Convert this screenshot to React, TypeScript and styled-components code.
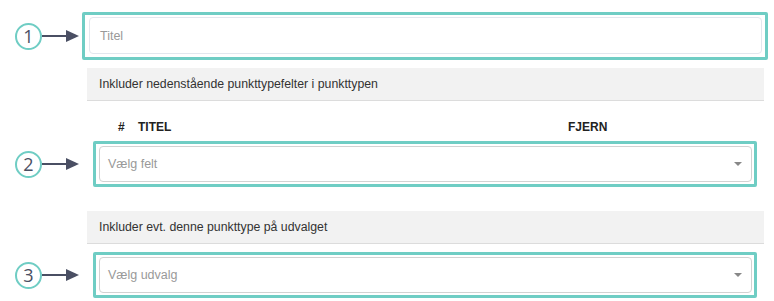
import React from "react";
import styled, { createGlobalStyle } from "styled-components";

const GlobalStyle = createGlobalStyle`
  html, body {
    margin: 0;
    padding: 0;
    background: #fff;
    font-family: "Liberation Sans", Arial, Helvetica, sans-serif;
  }
`;

const teal = "#6fcdc4";
const slate = "#4a4f63";

const Page = styled.div`
  width: 774px;
  height: 301px;
  padding-top: 12px;
  box-sizing: border-box;
  display: flex;
  flex-direction: column;
`;

const Row = styled.div`
  display: flex;
  align-items: center;
`;

const MarkerWrap = styled.div<{ $width: number }>`
  width: ${(p) => p.$width}px;
  flex: none;
  display: flex;
  align-items: center;
  padding-left: 15px;
  box-sizing: border-box;
`;

const Circle = styled.div`
  width: 27px;
  height: 27px;
  box-sizing: border-box;
  border: 2.5px solid ${teal};
  border-radius: 50%;
  display: flex;
  align-items: center;
  justify-content: center;
  font-family: "Open Sans", "Liberation Sans", sans-serif;
  font-size: 18px;
  color: ${slate};
  line-height: 1;
  background: #fff;
`;

const Highlight = styled.div<{ $width: number; $pad: string }>`
  width: ${(p) => p.$width}px;
  box-sizing: border-box;
  border: 3px solid ${teal};
  border-radius: 2px;
  padding: ${(p) => p.$pad};
`;

const Field = styled.div<{ $tone: "input" | "select" }>`
  height: ${(p) => (p.$tone === "input" ? 37 : 36)}px;
  box-sizing: border-box;
  border: 1px solid ${(p) => (p.$tone === "input" ? "#e3e7ee" : "#d2d2d2")};
  border-radius: 4px;
  display: flex;
  align-items: center;
  justify-content: space-between;
  padding: 0 9px 0 ${(p) => (p.$tone === "input" ? 10 : 8)}px;
  font-size: 12.5px;
  color: #999;
  background: #fff;
`;

const Caret = styled.span`
  width: 0;
  height: 0;
  border-left: 4px solid transparent;
  border-right: 4px solid transparent;
  border-top: 4px solid #888;
`;

const SectionHead = styled.div<{ $top: number }>`
  margin: ${(p) => p.$top}px 0 0 87px;
  width: 677px;
  height: 33px;
  box-sizing: border-box;
  background: #f2f2f2;
  border-bottom: 1px solid #dcdcdc;
  display: flex;
  align-items: center;
  padding-left: 12px;
  font-size: 12.3px;
  color: #333;
`;

const ColumnHeads = styled.div`
  margin-left: 87px;
  height: 40px;
  display: grid;
  grid-template-columns: 31px 20px 430px auto;
  align-items: end;
  padding-bottom: 7px;
  box-sizing: border-box;
  font-size: 12px;
  font-weight: bold;
  color: #222;
`;

const Spacer = styled.div<{ $h: number }>`
  height: ${(p) => p.$h}px;
`;

function Marker({ n, width }: { n: number; width: number }) {
  return (
    <MarkerWrap $width={width}>
      <Circle>{n}</Circle>
      <svg width="37" height="14" viewBox="0 0 37 14">
        <line x1="0" y1="7" x2="26" y2="7" stroke={slate} strokeWidth="2" />
        <polygon points="24,1 37,7 24,13" fill={slate} />
      </svg>
    </MarkerWrap>
  );
}

export default function App() {
  return (
    <>
      <GlobalStyle />
      <Page>
        <Row>
          <Marker n={1} width={82} />
          <Highlight $width={686} $pad="2px 3px 3px 4px">
            <Field $tone="input">Titel</Field>
          </Highlight>
        </Row>
        <SectionHead $top={8}>
          Inkluder nedenstående punkttypefelter i punkttypen
        </SectionHead>
        <ColumnHeads>
          <span />
          <span>#</span>
          <span>TITEL</span>
          <span>FJERN</span>
        </ColumnHeads>
        <Row>
          <Marker n={2} width={93} />
          <Highlight $width={664} $pad="2px 2px 2px 3px">
            <Field $tone="select">
              Vælg felt
              <Caret />
            </Field>
          </Highlight>
        </Row>
        <SectionHead $top={24}>
          Inkluder evt. denne punkttype på udvalget
        </SectionHead>
        <Spacer $h={8} />
        <Row>
          <Marker n={3} width={93} />
          <Highlight $width={664} $pad="2px 2px 2px 3px">
            <Field $tone="select">
              Vælg udvalg
              <Caret />
            </Field>
          </Highlight>
        </Row>
      </Page>
    </>
  );
}
